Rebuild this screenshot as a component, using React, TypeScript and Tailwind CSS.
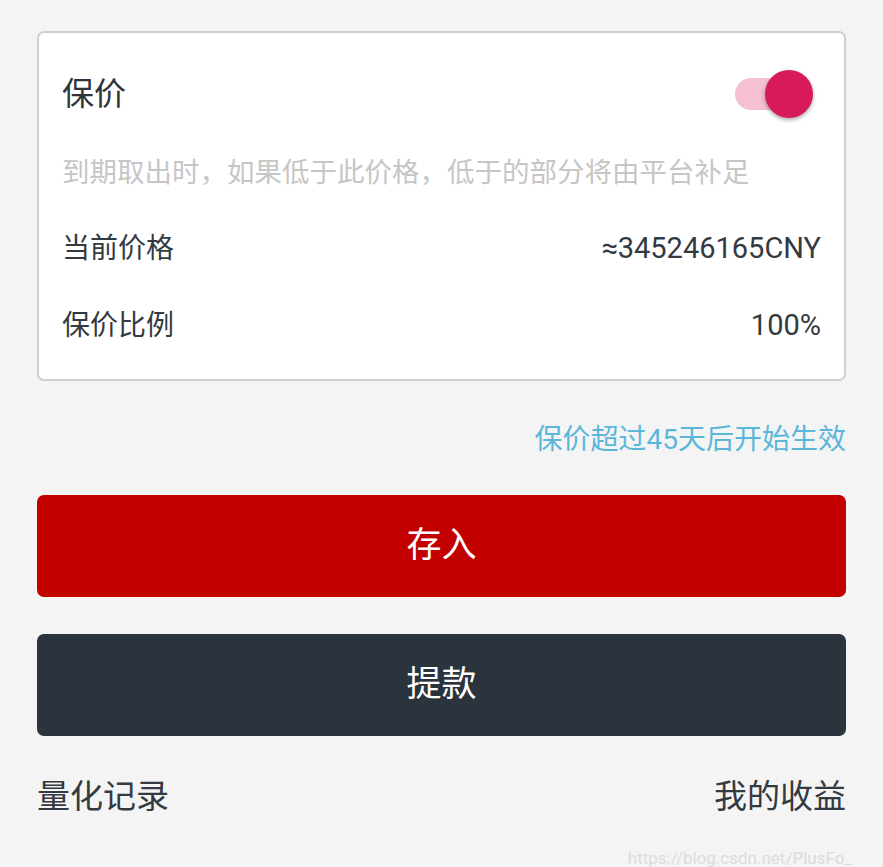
import React from "react";

const font = { fontFamily: "Roboto, 'Noto Sans CJK SC', sans-serif" };

const Toggle = () => (
  <div className="relative mr-[8px] h-[48px] w-[80px]">
    <div className="absolute left-[2px] top-[8px] h-[32px] w-[64px] rounded-full bg-[#f5c0d2]" />
    <div className="absolute right-0 top-0 h-[48px] w-[48px] rounded-full bg-[#d71a5c] shadow-[0_2px_4px_rgba(0,0,0,0.35)]" />
  </div>
);

export default function App() {
  return (
    <div className="min-h-[867px] w-full bg-[#f4f4f4] px-[37px] pt-[31px]" style={font}>
      <div className="rounded-[7px] border-2 border-[#cfcfcf] bg-white pb-[37px] pl-[23px] pr-[23px] pt-[30px]">
        <div className="flex h-[62px] items-center justify-between">
          <span className="text-[32px] text-[#2e3439]">保价</span>
          <Toggle />
        </div>
        <div className="mt-[32px] flex h-[32px] items-center text-[27.5px] text-[#c6c6c6]">
          到期取出时，如果低于此价格，低于的部分将由平台补足
        </div>
        <div className="mt-[44px] flex h-[32px] items-center justify-between text-[28px] text-[#333a41]">
          <span>当前价格</span>
          <span className="text-[29px]">≈345246165CNY</span>
        </div>
        <div className="mt-[45px] flex h-[32px] items-center justify-between text-[28px] text-[#333a41]">
          <span>保价比例</span>
          <span className="text-[29px]">100%</span>
        </div>
      </div>

      <div className="mt-[43px] flex h-[32px] items-center justify-end text-[28px] text-[#5bb7da]">
        保价超过45天后开始生效
      </div>

      <button className="mt-[39px] flex h-[102px] w-full items-center justify-center rounded-[7px] bg-[#c30000] text-[35px] text-white">
        存入
      </button>
      <button className="mt-[37px] flex h-[102px] w-full items-center justify-center rounded-[7px] bg-[#2b333d] text-[35px] text-white">
        提款
      </button>

      <div className="mt-[43px] flex h-[36px] items-center justify-between text-[33px] text-[#333a41]">
        <span>量化记录</span>
        <span>我的收益</span>
      </div>

      <div className="-mr-[6px] mt-[31px] flex justify-end text-[17px] text-[#dcdcdc]">
        https://blog.csdn.net/PlusFo_
      </div>
    </div>
  );
}
